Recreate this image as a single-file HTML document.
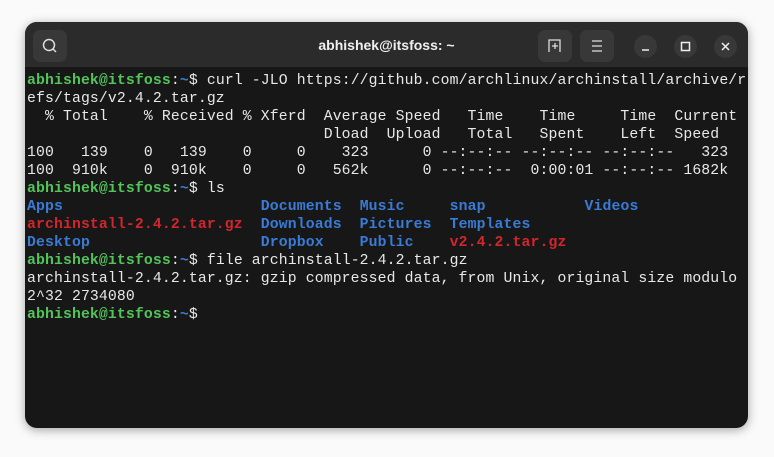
<!DOCTYPE html>
<html><head><meta charset="utf-8"><style>
html,body{margin:0;padding:0;width:774px;height:457px;background:#fafafa;overflow:hidden}
.win{position:absolute;left:25px;top:22px;width:723px;height:406px;background:#171717;border-radius:12px;box-shadow:0 2px 10px rgba(0,0,0,.35);overflow:hidden}
.hdr{position:absolute;left:0;top:0;width:100%;height:45px;background:#2b2b2b}
.title{position:absolute;left:0;right:0;top:15px;text-align:center;color:#f0f0f0;font:bold 14px "Liberation Sans",sans-serif}
.btn{position:absolute;top:8px;width:34px;height:32px;background:#383838;border-radius:7px}
.cb{position:absolute;top:13px;width:23px;height:23px;background:#383838;border-radius:50%}
pre{position:absolute;left:2px;top:50px;margin:0;font:14.78px/18px "Liberation Mono",monospace;color:#e8e8e8;letter-spacing:0.13px}
.g{color:#52c45a;font-weight:bold}.b{color:#3a7bd5;font-weight:bold}.r{color:#d0262e;font-weight:bold}
</style></head><body>
<div class="win">
<div class="hdr">
<div class="btn" style="left:8px"><svg width="34" height="32"><circle cx="16" cy="15" r="5.5" fill="none" stroke="#ddd" stroke-width="1.5"/><line x1="20" y1="19" x2="23" y2="22" stroke="#ddd" stroke-width="1.5"/></svg></div>
<div class="title">abhishek@itsfoss: ~</div>
<div class="btn" style="left:513px"><svg width="34" height="32"><path d="M11 22V10h11v12M14 16h6M17 13v6" fill="none" stroke="#ddd" stroke-width="1.3"/></svg></div>
<div class="btn" style="left:555px"><svg width="34" height="32"><path d="M12 11h10M12 16h10M12 21h10" stroke="#ddd" stroke-width="1.3"/></svg></div>
<div class="cb" style="left:609px"><svg width="23" height="23"><line x1="8" y1="15" x2="15" y2="15" stroke="#eee" stroke-width="1.5"/></svg></div>
<div class="cb" style="left:649px"><svg width="23" height="23"><rect x="7.5" y="7.5" width="8" height="8" fill="none" stroke="#eee" stroke-width="1.5"/></svg></div>
<div class="cb" style="left:689px"><svg width="23" height="23"><path d="M8 8l7 7M15 8l-7 7" stroke="#eee" stroke-width="1.5"/></svg></div>
</div>
<pre><span class="g">abhishek@itsfoss</span>:<span class="b">~</span>$ curl -JLO https://github.com/archlinux/archinstall/archive/r
efs/tags/v2.4.2.tar.gz
  % Total    % Received % Xferd  Average Speed   Time    Time     Time  Current
                                 Dload  Upload   Total   Spent    Left  Speed
100   139    0   139    0     0    323      0 --:--:-- --:--:-- --:--:--   323
100  910k    0  910k    0     0   562k      0 --:--:--  0:00:01 --:--:-- 1682k
<span class="g">abhishek@itsfoss</span>:<span class="b">~</span>$ ls
<span class="b">Apps</span>                      <span class="b">Documents</span>  <span class="b">Music</span>     <span class="b">snap</span>           <span class="b">Videos</span>
<span class="r">archinstall-2.4.2.tar.gz</span>  <span class="b">Downloads</span>  <span class="b">Pictures</span>  <span class="b">Templates</span>
<span class="b">Desktop</span>                   <span class="b">Dropbox</span>    <span class="b">Public</span>    <span class="r">v2.4.2.tar.gz</span>
<span class="g">abhishek@itsfoss</span>:<span class="b">~</span>$ file archinstall-2.4.2.tar.gz
archinstall-2.4.2.tar.gz: gzip compressed data, from Unix, original size modulo
2^32 2734080
<span class="g">abhishek@itsfoss</span>:<span class="b">~</span>$</pre>
</div>
</body></html>
